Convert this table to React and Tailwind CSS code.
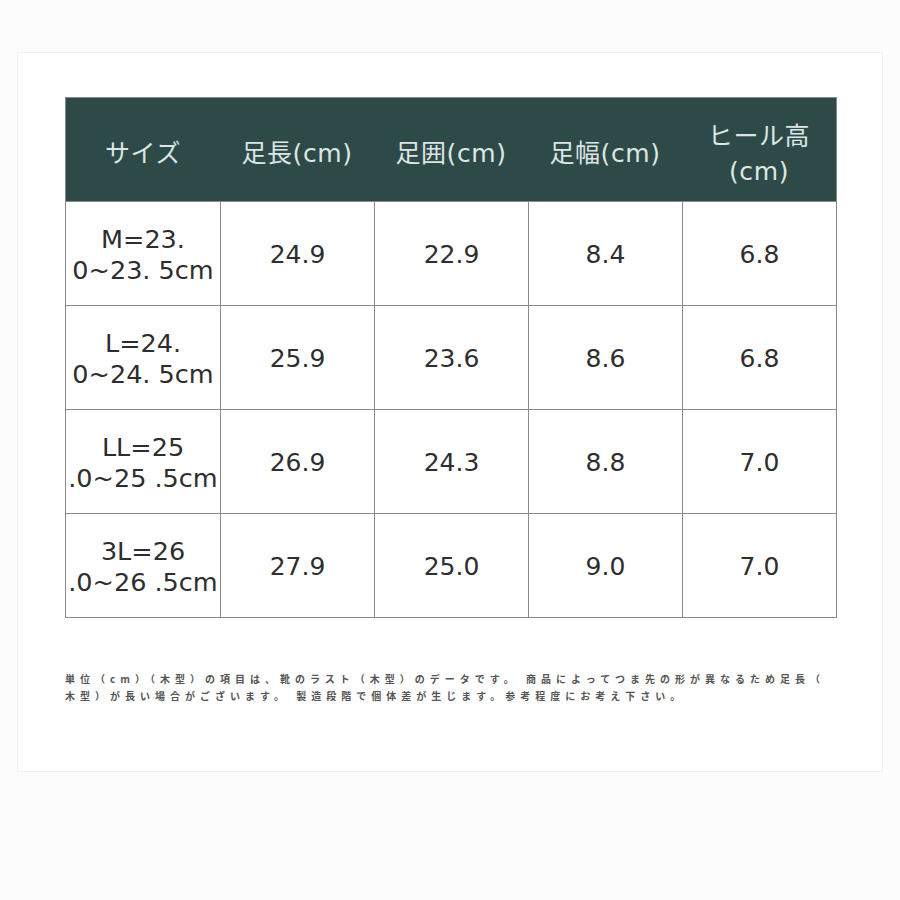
const headers = [['サイズ'], ['足長(cm)'], ['足囲(cm)'], ['足幅(cm)'], ['ヒール高', '(cm)']];

const rows = [
  { size: ['M=23.', '0~23. 5cm'], vals: ['24.9', '22.9', '8.4', '6.8'] },
  { size: ['L=24.', '0~24. 5cm'], vals: ['25.9', '23.6', '8.6', '6.8'] },
  { size: ['LL=25', '.0~25 .5cm'], vals: ['26.9', '24.3', '8.8', '7.0'] },
  { size: ['3L=26', '.0~26 .5cm'], vals: ['27.9', '25.0', '9.0', '7.0'] },
];

const font = { fontFamily: '"DejaVu Sans", "Noto Sans CJK JP", sans-serif' };

export default function App() {
  return (
    <div className="min-h-[900px] bg-[#fcfcfc] pt-[52px]" style={font}>
      <div className="mx-[17px] h-[720px] border border-[#f0f0f0] bg-white px-[47px] pt-[44px]">
        <div className="w-[772px] border-[1.5px] border-[#8a8a8a]">
          <div className="grid h-[103px] grid-cols-5 bg-[#2e4a48] pt-[8px] text-[25px] text-[#dce6e4]">
            {headers.map((h, i) => (
              <div key={i} className="flex flex-col items-center justify-center leading-[35px] tracking-[0.6px]">
                {h.map((line) => (
                  <span key={line}>{line}</span>
                ))}
              </div>
            ))}
          </div>
          {rows.map((r, i) => (
            <div key={i} className="grid h-[104px] grid-cols-5 border-t-[1.5px] border-[#8a8a8a] text-[25px] text-[#2e2e2e]">
              <div className="flex flex-col items-center justify-center whitespace-nowrap pt-[2px] text-[25.5px] leading-[31px]">
                <span>{r.size[0]}</span>
                <span>{r.size[1]}</span>
              </div>
              {r.vals.map((v, j) => (
                <div key={j} className="flex items-center justify-center border-l-[1.5px] border-[#8a8a8a] pt-[2px]">
                  {v}
                </div>
              ))}
            </div>
          ))}
        </div>
        <div className="mt-[52px] whitespace-nowrap text-[10px] font-bold leading-[17px] tracking-[5px] text-[#555]" style={{ fontFamily: '"Noto Sans CJK JP", sans-serif' }}>
          <p>単位（cm）（木型）の項目は、靴のラスト（木型）のデータです。 商品によってつま先の形が異なるため足長（</p>
          <p>木型）が長い場合がございます。 製造段階で個体差が生じます。参考程度にお考え下さい。</p>
        </div>
      </div>
    </div>
  );
}
